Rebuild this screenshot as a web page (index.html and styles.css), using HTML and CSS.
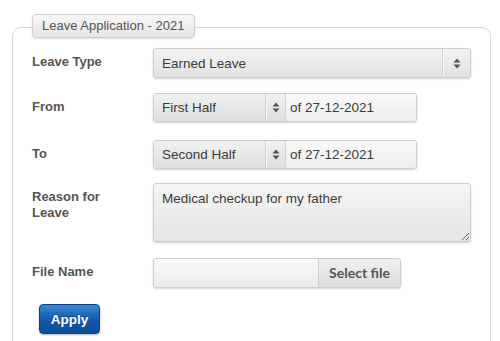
FILE: index.html
```html
<!DOCTYPE html>
<html>
<head>
<meta charset="utf-8">
<link rel="stylesheet" href="styles.css">
</head>
<body>
<div class="panel">
  <div class="legend">Leave Application - 2021</div>
  <div class="form">
    <div class="row r1">
      <div class="label">Leave Type</div>
      <div class="select wide">
        <span class="sel-text">Earned Leave</span>
        <span class="arrow arrow-wide"><svg width="8" height="11" viewBox="0 0 8 11"><path d="M4 0.5 L7.5 4.5 H0.5 Z M4 10.5 L7.5 6.5 H0.5 Z" fill="#555"/></svg></span>
      </div>
    </div>
    <div class="row r2">
      <div class="label">From</div>
      <div class="combo">
        <div class="combo-sel">
          <span class="sel-text sel-strong">First Half</span>
          <span class="arrow arrow-small"><svg width="8" height="11" viewBox="0 0 8 11"><path d="M4 0.5 L7.5 4.5 H0.5 Z M4 10.5 L7.5 6.5 H0.5 Z" fill="#555"/></svg></span>
        </div>
        <div class="combo-input">of 27-12-2021</div>
      </div>
    </div>
    <div class="row r3">
      <div class="label">To</div>
      <div class="combo">
        <div class="combo-sel">
          <span class="sel-text sel-strong">Second Half</span>
          <span class="arrow arrow-small"><svg width="8" height="11" viewBox="0 0 8 11"><path d="M4 0.5 L7.5 4.5 H0.5 Z M4 10.5 L7.5 6.5 H0.5 Z" fill="#555"/></svg></span>
        </div>
        <div class="combo-input">of 27-12-2021</div>
      </div>
    </div>
    <div class="row r4">
      <div class="label">Reason for<br>Leave</div>
      <textarea class="area" readonly>Medical checkup for my father</textarea>
    </div>
    <div class="row r5">
      <div class="label">File Name</div>
      <div class="file">
        <div class="file-name"></div>
        <div class="file-btn">Select file</div>
      </div>
    </div>
    <div class="row r6">
      <button class="apply">Apply</button>
    </div>
  </div>
</div>
</body>
</html>
```
FILE: styles.css
```css
html, body {
  margin: 0;
  padding: 0;
  background: #fff;
  overflow: hidden;
}
body {
  font-family: "Liberation Sans", Arial, sans-serif;
  color: #444;
}
.panel {
  position: relative;
  margin: 27px 0 0 12px;
  width: 479px;
  border: 1px solid #d8d8d8;
  border-radius: 9px;
  padding: 20px 19px 20px 19px;
  box-sizing: border-box;
}
.legend {
  position: absolute;
  left: 19px;
  top: -14px;
  width: 163px;
  height: 24px;
  box-sizing: border-box;
  padding-left: 9px;
  line-height: 22px;
  font-size: 13px;
  color: #555;
  background: linear-gradient(#f7f7f7, #e6e6e6);
  border: 1px solid #cfcfcf;
  border-radius: 4px;
  box-shadow: 0 1px 2px rgba(0,0,0,0.12);
}
.form {
  display: flex;
  flex-direction: column;
}
.row {
  display: flex;
  align-items: flex-start;
}
.r2 { margin-top: 15px; }
.r3 { margin-top: 18px; }
.r4 { margin-top: 14px; }
.r5 { margin-top: 16px; }
.r6 { margin-top: 16px; }
.label {
  width: 121px;
  flex: none;
  padding-top: 6px;
  font-size: 13px;
  line-height: 16px;
  font-weight: bold;
  color: #555;
}
.select {
  display: flex;
  align-items: center;
  height: 30px;
  box-sizing: border-box;
  border: 1px solid #cdcdcd;
  border-radius: 3px;
  background: linear-gradient(#f3f3f3, #e2e2e2);
  box-shadow: 0 1px 2px rgba(0,0,0,0.18);
}
.wide {
  width: 318px;
}
.sel-text {
  flex: 1;
  padding-left: 8px;
  font-size: 13.5px;
  color: #3c3c3c;
}
.sel-strong {
  color: #3a3a3a;
}
.arrow {
  flex: none;
  align-self: stretch;
  display: flex;
  align-items: center;
  justify-content: center;
  border-left: 1px solid #d2d2d2;
  box-shadow: inset 1px 0 0 #f8f8f8;
}
.arrow-wide {
  width: 27px;
}
.arrow-small {
  width: 19px;
}
.combo {
  display: flex;
  width: 264px;
  height: 29px;
  box-sizing: border-box;
  border: 1px solid #cdcdcd;
  border-radius: 3px;
  overflow: hidden;
  box-shadow: 0 1px 2px rgba(0,0,0,0.18);
}
.combo-sel {
  display: flex;
  align-items: center;
  width: 131px;
  flex: none;
  background: linear-gradient(#f1f1f1, #dedede);
  border-right: 1px solid #d4d4d4;
}
.combo-input {
  flex: 1;
  padding-left: 4px;
  font-size: 13.5px;
  line-height: 27px;
  color: #3c3c3c;
  background: linear-gradient(#f8f8f8, #eeeeee);
}
.area {
  display: block;
  width: 318px;
  height: 59px;
  box-sizing: border-box;
  margin: 0;
  padding: 7px 8px;
  font-family: "Liberation Sans", Arial, sans-serif;
  font-size: 13.5px;
  line-height: 16px;
  color: #3c3c3c;
  border: 1px solid #cdcdcd;
  border-radius: 3px;
  background: linear-gradient(#f5f5f5, #e6e6e6);
  box-shadow: 0 1px 2px rgba(0,0,0,0.18);
  outline: none;
}
.file {
  display: flex;
  width: 248px;
  height: 30px;
  box-sizing: border-box;
  border: 1px solid #cdcdcd;
  border-radius: 3px;
  overflow: hidden;
  box-shadow: 0 1px 2px rgba(0,0,0,0.18);
}
.file-name {
  flex: 1;
  background: linear-gradient(#f8f8f8, #ececec);
}
.file-btn {
  width: 81px;
  flex: none;
  text-align: center;
  font-family: Lato, "Liberation Sans", sans-serif;
  font-weight: 700;
  font-size: 14px;
  line-height: 28px;
  color: #555;
  border-left: 1px solid #d0d0d0;
  background: linear-gradient(#f0f0f0, #dcdcdc);
}
.apply {
  display: block;
  margin: 0 0 0 7px;
  width: 61px;
  height: 30px;
  padding: 0;
  font-family: "Liberation Sans", Arial, sans-serif;
  font-weight: bold;
  font-size: 13.5px;
  color: #fff;
  border: 1px solid #0c3f82;
  border-radius: 4px;
  background: linear-gradient(#3a86d6, #1457a8 55%, #0e4c98);
  box-shadow: 0 1px 2px rgba(0,0,0,0.3);
  text-shadow: 0 -1px 0 rgba(0,0,0,0.3);
}
```
